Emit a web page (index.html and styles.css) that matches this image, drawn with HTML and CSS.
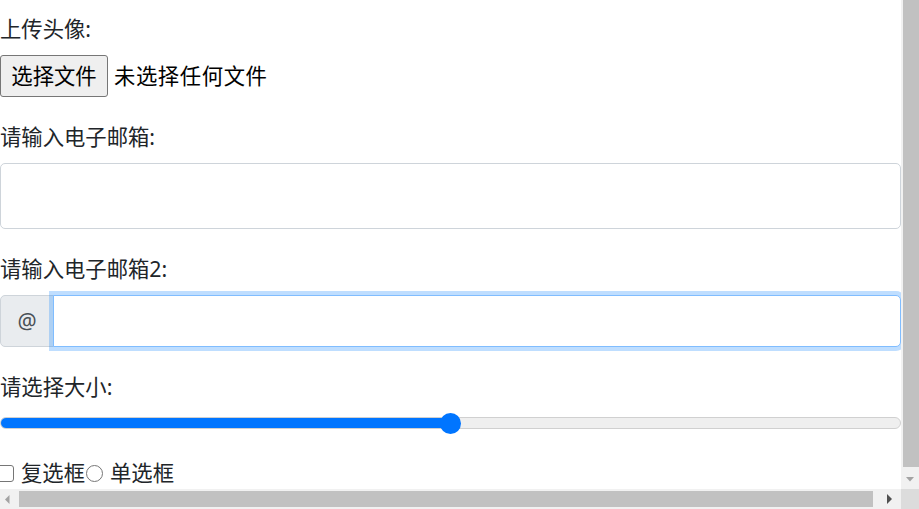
FILE: index.html
```html
<!DOCTYPE html>
<html lang="zh-CN">
<head>
<meta charset="utf-8">
<title>表单</title>
<link rel="stylesheet" href="styles.css">
</head>
<body>
<div class="window">
  <main class="content">
    <form class="form">
      <div class="group">
        <label class="label">上传头像:</label>
        <div class="file">
          <button type="button" class="file-btn">选择文件</button>
          <span class="file-name">未选择任何文件</span>
        </div>
      </div>
      <div class="group">
        <label class="label">请输入电子邮箱:</label>
        <input type="email" class="control control-lg">
      </div>
      <div class="group">
        <label class="label">请输入电子邮箱2:</label>
        <div class="input-group">
          <span class="addon">@</span>
          <input type="email" class="control control-focus">
        </div>
      </div>
      <div class="group">
        <label class="label">请选择大小:</label>
        <input type="range" class="range" min="0" max="100" value="50">
      </div>
      <div class="checks">
        <input type="checkbox" class="check">
        <span class="check-text">复选框</span>
        <input type="radio" class="radio">
        <span class="radio-text">单选框</span>
      </div>
    </form>
  </main>
  <div class="vbar">
    <div class="vthumb"></div>
    <div class="vbtn">
      <svg width="8" height="5" viewBox="0 0 8 5"><path d="M0 0H8L4 4.5Z" fill="#a3a3a3"/></svg>
    </div>
  </div>
  <div class="hbar">
    <div class="hbtn hbtn-left">
      <svg width="5" height="9" viewBox="0 0 5 9"><path d="M4.5 0V9L0 4.5Z" fill="#a3a3a3"/></svg>
    </div>
    <div class="hthumb"></div>
    <div class="hbtn hbtn-right">
      <svg width="5" height="10" viewBox="0 0 5 10"><path d="M0 0V10L5 5Z" fill="#505050"/></svg>
    </div>
  </div>
  <div class="corner"></div>
</div>
</body>
</html>
```
FILE: styles.css
```css
html, body {
  margin: 0;
  padding: 0;
  background: #fff;
  overflow: hidden;
}

body {
  font-family: "Noto Sans", "Noto Sans CJK SC", sans-serif;
  font-size: 21.33px;
  line-height: 32px;
  color: #212529;
}

.window {
  display: grid;
  grid-template-columns: 901px 18px;
  grid-template-rows: 489px 20px;
  width: 919px;
  height: 509px;
}

.content {
  overflow: hidden;
  padding-top: 11px;
  box-sizing: border-box;
}

.form {
  display: flex;
  flex-direction: column;
}

.group {
  display: flex;
  flex-direction: column;
  margin-bottom: 22.5px;
}

.label {
  display: block;
  padding-top: 2px;
  margin-bottom: 9.5px;
}

.file {
  display: flex;
  align-items: center;
  gap: 6px;
}

.file-btn {
  font: inherit;
  color: #000;
  height: 42px;
  width: 108px;
  padding: 0;
  background: #efefef;
  border: 1px solid #767676;
  border-radius: 3px;
  line-height: 40px;
}

.file-name {
  color: #000;
  letter-spacing: 0.6px;
}

.control {
  display: block;
  box-sizing: border-box;
  width: 100%;
  margin: 0;
  font: inherit;
  background: #fff;
  border: 1px solid #ced4da;
  border-radius: 5px;
  outline: none;
}

.control-lg {
  height: 66px;
}

.input-group {
  display: flex;
  height: 52px;
}

.addon {
  box-sizing: border-box;
  width: 54px;
  flex: none;
  display: flex;
  align-items: center;
  justify-content: center;
  background: #e9ecef;
  border: 1px solid #ced4da;
  border-radius: 5px 0 0 5px;
  color: #495057;
}

.control-focus {
  flex: 1;
  width: auto;
  height: 100%;
  margin-left: -1px;
  border-color: #80bdff;
  border-radius: 0 5px 5px 0;
  box-shadow: 0 0 0 4px rgba(0, 123, 255, 0.25);
  position: relative;
  z-index: 1;
}

.range {
  -webkit-appearance: none;
  appearance: none;
  display: block;
  width: 100%;
  height: 21px;
  margin: 0;
  background: transparent;
}

.range::-webkit-slider-runnable-track {
  box-sizing: border-box;
  height: 12px;
  border: 1px solid #d0d0d0;
  border-radius: 6px;
  background: linear-gradient(to right, #0075ff 50%, #efefef 50%);
}

.range::-webkit-slider-thumb {
  -webkit-appearance: none;
  appearance: none;
  width: 21px;
  height: 21px;
  border-radius: 50%;
  background: #0075ff;
  border: none;
  margin-top: -5.5px;
}

.checks {
  display: flex;
  align-items: center;
  height: 32px;
  margin-top: 1px;
}

.check,
.radio {
  -webkit-appearance: none;
  appearance: none;
  box-sizing: border-box;
  width: 17px;
  height: 17px;
  margin: 0;
  background: #fff;
  border: 1px solid #767676;
  flex: none;
}

.check {
  border-radius: 3px;
  margin-left: -3px;
  margin-right: 7px;
}

.radio {
  border-radius: 50%;
  margin-left: 1px;
  margin-right: 7px;
}

.vbar {
  background: #f1f1f1;
  display: flex;
  flex-direction: column;
  padding-left: 2px;
}

.vthumb {
  flex: 1;
  background: #c1c1c1;
}

.vbtn {
  height: 22px;
  display: flex;
  align-items: center;
  justify-content: center;
  margin-left: -2px;
  padding-top: 2px;
  box-sizing: border-box;
}

.hbar {
  background: #f1f1f1;
  display: flex;
  align-items: stretch;
  padding: 2px 0;
}

.hbtn {
  display: flex;
  align-items: center;
  justify-content: center;
}

.hbtn-left {
  width: 19px;
  padding-right: 5px;
  box-sizing: border-box;
}

.hthumb {
  width: 854px;
  background: #c1c1c1;
}

.hbtn-right {
  flex: 1;
  padding-left: 4px;
}

.corner {
  background: #dcdcdc;
}
```
